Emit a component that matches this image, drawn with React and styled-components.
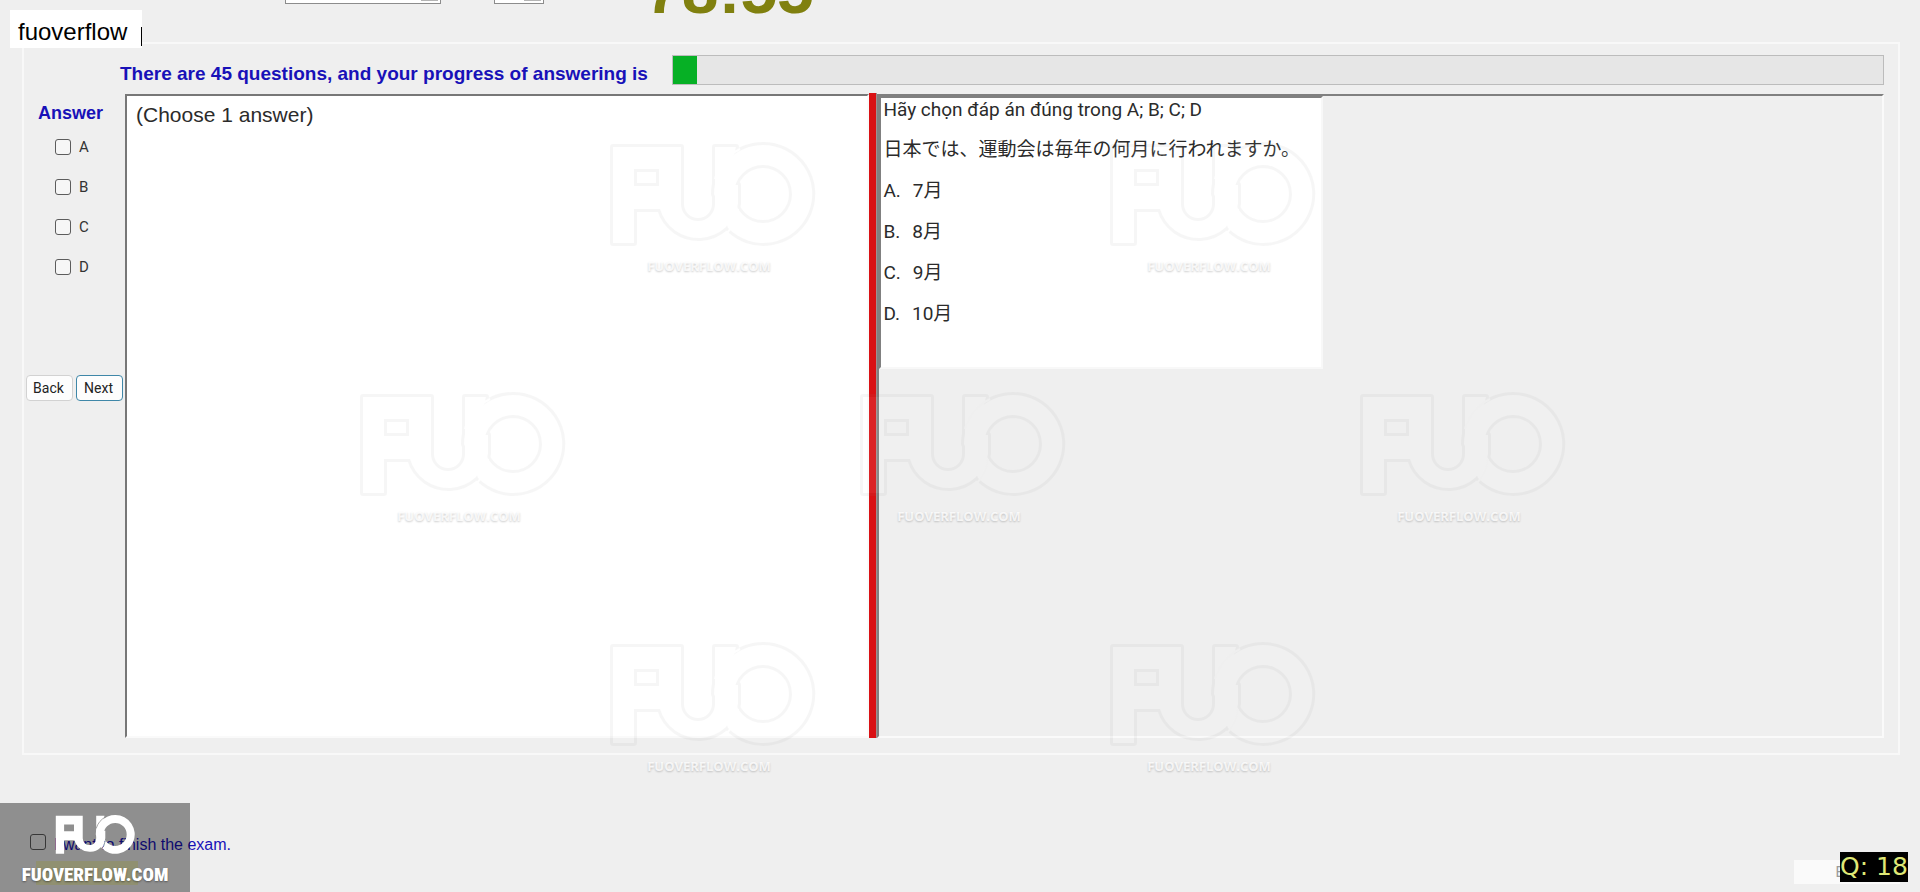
import { useId, useState } from "react";
import styled, { createGlobalStyle } from "styled-components";

const GlobalStyle = createGlobalStyle`
  * {
    box-sizing: border-box;
  }

  body {
    margin: 0;
    background: #efefef;
    color: #2b2b2b;
    font-family: "Liberation Sans", Arial, sans-serif;
  }
`;

const Page = styled.div`
  position: relative;
  display: flex;
  flex-direction: column;
  min-height: 100vh;
  overflow: hidden;
`;

/* The header is scrolled up, only the lower edge of its controls shows */
const Header = styled.header`
  display: flex;
  align-items: flex-end;
  height: 42px;
  padding: 0 0 28px 285px;
`;

const HeaderSelect = styled.select`
  appearance: none;
  flex: none;
  width: ${(props) => props.$width};
  height: 24px;
  margin: 0 ${(props) => props.$gap} 10px 0;
  border: 1px solid #8c8c8c;
  border-radius: 0;
  background: linear-gradient(#b4b4b4, #b4b4b4) right 2px bottom 2px / 17px 18px
    no-repeat #fff;
`;

const Timer = styled.div`
  flex: none;
  height: 48px;
  color: #80800f;
  font-size: 66px;
  font-weight: bold;
  line-height: 48px;
`;

const ExamBox = styled.main`
  flex: 1;
  display: flex;
  flex-direction: column;
  gap: 8px;
  margin: 0 20px 0 22px;
  padding: 11px 14px 15px 0;
  border: 2px solid #f8f8f8;
`;

const ProgressRow = styled.div`
  display: flex;
  gap: 24px;
  height: 30px;
  padding-left: 96px;
`;

const ProgressText = styled.label`
  flex: none;
  padding-top: 8px;
  color: #1811b8;
  font-size: 19px;
  font-weight: bold;
  line-height: 22px;
  white-space: nowrap;
`;

const ProgressTrack = styled.div`
  flex: 1;
  border: 1px solid #bcbcbc;
  background: #e6e6e6;
`;

const ProgressFill = styled.div`
  height: 100%;
  background: #06b025;
`;

const Workspace = styled.div`
  flex: 1;
  display: grid;
  grid-template-columns: 101px 744fr 8px 1006fr;
`;

const Sidebar = styled.aside`
  display: flex;
  flex-direction: column;
  padding: 9px 0 0 2px;
`;

const AnswerTitle = styled.h2`
  margin: 0 0 15px 12px;
  color: #1811b8;
  font-size: 18px;
  line-height: 22px;
`;

const Options = styled.div`
  display: flex;
  flex-direction: column;
  gap: 24px;
  margin: 0 0 100px 29px;
`;

const CheckLabel = styled.label`
  display: flex;
  align-items: center;
  gap: 8px;
  height: 16px;
  color: #333;
  font-family: Roboto, sans-serif;
  font-size: 15px;
  line-height: 16px;
`;

const FinishLabel = styled(CheckLabel)`
  color: #1811b8;
  font-family: inherit;
  font-size: 16px;

  span {
    padding-top: 6px;
  }
`;

const CheckInput = styled.input`
  appearance: none;
  width: 16px;
  height: 16px;
  margin: 0;
  border: 1px solid #5c5c5c;
  border-radius: 3px;
  background: ${(props) => (props.$clear ? "transparent" : "#f6f6f6")};

  &:checked {
    background: #1d6fb8;
  }
`;

const Buttons = styled.div`
  display: flex;
  gap: 3px;
`;

const NavButton = styled.button`
  width: 47px;
  height: 26px;
  padding: 0 2px 0 0;
  border: 1px solid ${(props) => (props.$active ? "#3f87a8" : "#d2d2d2")};
  border-radius: 4px;
  background: #fdfdfd;
  color: #222;
  font-family: Roboto, sans-serif;
  font-size: 14px;
`;

const AnswerPane = styled.section`
  margin-top: 1px;
  padding: 7px 9px;
  border: 2px solid;
  border-color: #777 #fafafa #fafafa #777;
  background: #fff;
  font-size: 21px;
  line-height: 24px;
`;

const Splitter = styled.div`
  border-right: 1px solid #a09090;
  background: #d91114;
`;

const QuestionPane = styled.section`
  margin-top: 1px;
  border: 2px solid;
  border-color: #808080 #fafafa #fafafa #808080;
`;

const QuestionCard = styled.article`
  width: 444px;
  height: 273px;
  padding: 0 2px;
  border: 2px solid;
  border-color: #808080 #f8f8f8 #f8f8f8 #808080;
  background: #fff;
  font-family: Roboto, "Noto Sans CJK JP", sans-serif;
  font-size: 19px;
  line-height: 24px;
  white-space: nowrap;

  p {
    margin: 0 0 17px;
  }
`;

const Instruction = styled.div`
  margin-bottom: 14px;
`;

const Japanese = styled.span`
  font-family: "Noto Sans CJK JP", sans-serif;
`;

const Choice = styled.p`
  display: flex;
  gap: 12px;
`;

const Footer = styled.footer`
  display: flex;
  justify-content: space-between;
  height: 137px;
  padding: 0 20px 0 30px;
`;

const FinishArea = styled.div`
  display: flex;
  flex-direction: column;
  align-items: flex-start;
  gap: 11px;
  padding-top: 79px;
`;

const FinishButton = styled.button`
  width: 102px;
  height: 24px;
  margin-left: 6px;
  border: 0;
  background: #f0f0bc;
`;

const ExitButton = styled.button`
  width: 106px;
  height: 24px;
  margin-top: 105px;
  border: 0;
  background: #fafafa;
  color: #999;
  font-family: Roboto, sans-serif;
  font-size: 14px;
`;

const NameTag = styled.div`
  position: absolute;
  top: 10px;
  left: 10px;
  display: flex;
  align-items: center;
  width: 132px;
  height: 38px;
  padding: 6px 0 0 8px;
  background: #fff;
  color: #000;
  font-size: 24px;
  line-height: 28px;
`;

const Caret = styled.span`
  align-self: flex-end;
  width: 1px;
  height: 19px;
  margin: 0 0 2px auto;
  background: #000;
`;

const Counter = styled.div`
  position: absolute;
  right: 12px;
  bottom: 10px;
  width: 68px;
  height: 30px;
  background: #000;
  color: #dfe876;
  font-family: "DejaVu Sans", sans-serif;
  font-size: 25px;
  line-height: 30px;
  text-align: center;
  white-space: nowrap;
`;

const SiteBadge = styled.div`
  position: absolute;
  left: 0;
  bottom: 0;
  display: flex;
  flex-direction: column;
  align-items: center;
  gap: 9px;
  width: 190px;
  height: 89px;
  padding-top: 12px;
  background: rgba(0, 0, 0, 0.4);
  color: #fff;
  font-family: "Roboto Condensed", "Liberation Sans Narrow",
    "DejaVu Sans Condensed", sans-serif;
  font-size: 19px;
  font-weight: 900;
  line-height: 22px;
  text-shadow: 0 1px 2px rgba(0, 0, 0, 0.4);
`;

const Watermarks = styled.div`
  position: absolute;
  top: 145px;
  left: 360px;
  display: flex;
  flex-direction: column;
  gap: 119px;
  pointer-events: none;
`;

const WatermarkRow = styled.div`
  display: flex;
  gap: 296px;
  padding-left: ${(props) => (props.$shifted ? "250px" : "0")};
`;

const Watermark = styled.div`
  display: flex;
  flex-direction: column;
  align-items: center;
  gap: 11px;
  width: 204px;
  height: 131px;
  padding-right: 6px;
  color: rgba(255, 255, 255, 0.8);
  font-family: "Open Sans", sans-serif;
  font-size: 13px;
  font-weight: bold;
  line-height: 18px;
  text-shadow: 0 1px 2px rgba(0, 0, 0, 0.2);

  svg {
    flex: none;
    margin-right: -6px;
    overflow: visible;
  }
`;

const Logo = ({ width, height, faint }) => {
  const maskId = useId();
  const shapes = (
    <>
      <path
        d="M3 2H71V59A17 17 0 0 0 105 59V2H126L116 40H128V59A40 40 0 0 1 50 64H24V98H3ZM24 24V41H49V24Z"
        fillRule="evenodd"
      />
      <path
        d="M153 0A49 49 0 1 1 118 83L104 49A49 49 0 0 1 153 0ZM153 20A29 29 0 0 0 153 78A29 29 0 0 0 153 20Z"
        fillRule="evenodd"
      />
    </>
  );

  return (
    <svg width={width} height={height} viewBox="0 0 204 101" aria-hidden="true">
      <mask id={maskId} maskUnits="userSpaceOnUse" x="-4" y="-4" width="212" height="109">
        <rect x="-4" y="-4" width="212" height="109" fill="#fff" />
        <g fill="none" stroke="#000" strokeWidth="2">
          <path d="M105 34A50 50 0 0 1 130 4" />
          <path d="M128 64A40 40 0 0 1 117 88" />
        </g>
      </mask>
      <g mask={`url(#${maskId})`} fill="#fff" opacity={faint ? 0.07 : 1}>
        {faint && (
          <g stroke="#8c8c8c" strokeWidth="6" strokeLinejoin="round">
            {shapes}
          </g>
        )}
        {shapes}
      </g>
    </svg>
  );
};

const options = ["A", "B", "C", "D"];
const choices = ["7月", "8月", "9月", "10月"];
const watermarkRows = [2, 3, 2];
const progress = 2;

export default function App() {
  const [selected, setSelected] = useState([]);
  const [wantsFinish, setWantsFinish] = useState(false);

  const toggleOption = (option) => {
    setSelected(
      selected.includes(option)
        ? selected.filter((item) => item !== option)
        : [...selected, option]
    );
  };

  return (
    <Page>
      <GlobalStyle />
      <Header>
        <HeaderSelect $width="156px" $gap="53px" aria-label="Font" />
        <HeaderSelect $width="50px" $gap="101px" aria-label="Size" />
        <Timer>78:55</Timer>
      </Header>

      <ExamBox>
        <ProgressRow>
          <ProgressText id="progress-label">
            There are 45 questions, and your progress of answering is
          </ProgressText>
          <ProgressTrack
            role="progressbar"
            aria-labelledby="progress-label"
            aria-valuenow={progress}
          >
            <ProgressFill style={{ width: `${progress}%` }} />
          </ProgressTrack>
        </ProgressRow>

        <Workspace>
          <Sidebar>
            <AnswerTitle>Answer</AnswerTitle>
            <Options>
              {options.map((option) => (
                <CheckLabel key={option}>
                  <CheckInput
                    type="checkbox"
                    checked={selected.includes(option)}
                    onChange={() => toggleOption(option)}
                  />
                  {option}
                </CheckLabel>
              ))}
            </Options>
            <Buttons>
              <NavButton type="button">Back</NavButton>
              <NavButton type="button" $active>
                Next
              </NavButton>
            </Buttons>
          </Sidebar>
          <AnswerPane>(Choose 1 answer)</AnswerPane>
          <Splitter />
          <QuestionPane>
            <QuestionCard>
              <Instruction>Hãy chọn đáp án đúng trong A; B; C; D</Instruction>
              <p>
                <Japanese lang="ja">
                  日本では、運動会は毎年の何月に行われますか。
                </Japanese>
              </p>
              {choices.map((choice, index) => (
                <Choice key={choice}>
                  <span>{options[index]}.</span>
                  <span>{choice}</span>
                </Choice>
              ))}
            </QuestionCard>
          </QuestionPane>
        </Workspace>
      </ExamBox>

      <Footer>
        <FinishArea>
          <FinishLabel>
            <CheckInput
              type="checkbox"
              $clear
              checked={wantsFinish}
              onChange={() => setWantsFinish(!wantsFinish)}
            />
            <span>I want to finish the exam.</span>
          </FinishLabel>
          <FinishButton type="button" aria-label="Finish" />
        </FinishArea>
        <ExitButton type="button" disabled>
          Exit
        </ExitButton>
      </Footer>

      <Watermarks>
        {watermarkRows.map((count, row) => (
          <WatermarkRow key={row} $shifted={count === 2}>
            {Array.from({ length: count }, (_, index) => (
              <Watermark key={index}>
                <Logo width="204" height="101" faint />
                FUOVERFLOW.COM
              </Watermark>
            ))}
          </WatermarkRow>
        ))}
      </Watermarks>

      <NameTag>
        fuoverflow
        <Caret />
      </NameTag>
      <SiteBadge>
        <Logo width="82" height="40" />
        FUOVERFLOW.COM
      </SiteBadge>
      <Counter>Q: 18</Counter>
    </Page>
  );
}
